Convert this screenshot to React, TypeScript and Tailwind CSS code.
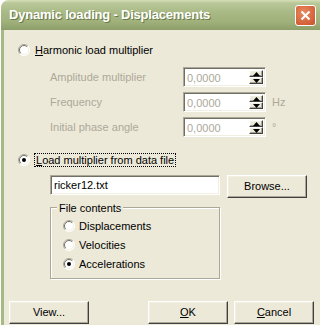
const sunken =
  "border border-t-[#ACA899] border-l-[#ACA899] border-b-white border-r-white shadow-[inset_1px_1px_0_#716F64,inset_-1px_-1px_0_#F1EFE2]";
const raised =
  "border border-t-white border-l-white border-b-[#404040] border-r-[#404040] shadow-[inset_-1px_-1px_0_#ACA899,inset_1px_1px_0_#F1EFE2] bg-[#ECE9D8]";

const Radio = ({ checked }: { checked?: boolean }) => (
  <svg width="12" height="12" viewBox="0 0 12 12" className="shrink-0">
    <circle cx="6" cy="6" r="5.5" fill="#fff" />
    <path d="M2.1 9.9 A5.5 5.5 0 0 1 9.9 2.1" fill="none" stroke="#ACA899" />
    <path d="M9.9 2.1 A5.5 5.5 0 0 1 2.1 9.9" fill="none" stroke="#fff" />
    <path d="M2.8 9.2 A4.5 4.5 0 0 1 9.2 2.8" fill="none" stroke="#716F64" />
    <path d="M9.2 2.8 A4.5 4.5 0 0 1 2.8 9.2" fill="none" stroke="#F1EFE2" />
    {checked && <circle cx="6" cy="6" r="2" fill="#000" />}
  </svg>
);

const SpinBox = () => (
  <div className={`w-[83px] h-[20px] bg-white flex items-stretch p-[2px] ${sunken}`}>
    <span className="flex-1 pl-[1px] leading-[16px] text-[#ACA899]">0,0000</span>
    <div className="w-[14px] flex flex-col">
      <div className={`flex-1 flex items-center justify-center ${raised}`}>
        <svg width="7" height="4" viewBox="0 0 7 4">
          <path d="M0 4 L3.5 0 L7 4 Z" fill="#000" />
        </svg>
      </div>
      <div className={`flex-1 flex items-center justify-center ${raised}`}>
        <svg width="7" height="4" viewBox="0 0 7 4">
          <path d="M0 0 L3.5 4 L7 0 Z" fill="#000" />
        </svg>
      </div>
    </div>
  </div>
);

const ParamRow = ({ label, unit }: { label: string; unit?: string }) => (
  <div className="flex items-center h-[20px]">
    <span className="w-[165px] pl-[32px] text-[#ACA899]">{label}</span>
    <SpinBox />
    <span className="ml-[6px] text-[#ACA899]">{unit}</span>
  </div>
);

const Button = ({ children, className = "" }: { children: React.ReactNode; className?: string }) => (
  <div className={`w-[80px] h-[23px] flex items-center justify-center text-black ${raised} ${className}`}>
    {children}
  </div>
);

export default function App() {
  return (
    <div className="w-[320px] h-[325px] overflow-hidden bg-white font-['Liberation_Sans',Arial,sans-serif] text-[11px] text-black">
      <div className="h-full ml-[1px] rounded-tl-[8px] overflow-hidden flex flex-col bg-[#ECE9D8]">
        <div className="h-[30px] shrink-0 flex items-center pl-[8px] pr-[4px] bg-[linear-gradient(#D6DFB8_0px,#BAC899_3px,#A9BA86_12px,#9FB07A_22px,#8D9F68_30px)]">
          <span className="flex-1 text-white font-bold text-[13px] tracking-[-0.2px] [text-shadow:1px_1px_0_#6B7A48]">
            Dynamic loading - Displacements
          </span>
          <div className="w-[21px] h-[21px] rounded-[3px] border border-white bg-[radial-gradient(circle_at_40%_35%,#E98A5E,#C9502C)] flex items-center justify-center">
            <svg width="11" height="11" viewBox="0 0 11 11">
              <path d="M1.5 1.5 L9.5 9.5 M9.5 1.5 L1.5 9.5" stroke="#fff" strokeWidth="2" />
            </svg>
          </div>
        </div>

        <div className="flex-1 flex flex-col border-l-[3px] border-[#A5B985] pl-[14px]">
          <div className="mt-[13px] h-[14px] flex items-center gap-[5px]">
            <Radio />
            <span>
              <u>H</u>armonic load multiplier
            </span>
          </div>

          <div className="mt-[10px] flex flex-col gap-[5px]">
            <ParamRow label="Amplitude multiplier" />
            <ParamRow label="Frequency" unit="Hz" />
            <ParamRow label="Initial phase angle" unit="°" />
          </div>

          <div className="mt-[16px] h-[14px] flex items-center gap-[4px]">
            <Radio checked />
            <span className="border border-dotted border-black px-[1px] leading-[12px]">
              <u>L</u>oad multiplier from data file
            </span>
          </div>

          <div className="mt-[8px] flex items-start pl-[32px] gap-[7px]">
            <div className={`w-[170px] h-[20px] bg-white pl-[3px] leading-[18px] ${sunken}`}>ricker12.txt</div>
            <Button>Browse...</Button>
          </div>

          <div className="ml-[32px] mt-[9px] w-[170px] relative border border-[#ACA899] shadow-[1px_1px_0_#fff,inset_1px_1px_0_#fff] pl-[12px] pt-[11px] pb-[7px] flex flex-col gap-[5px]">
            <span className="absolute -top-[8px] left-[6px] px-[2px] bg-[#ECE9D8]">File contents</span>
            {["Displacements", "Velocities", "Accelerations"].map((s, i) => (
              <div key={s} className="h-[14px] flex items-center gap-[4px]">
                <Radio checked={i === 2} />
                <span>{s}</span>
              </div>
            ))}
          </div>

          <div className="mt-[22px] flex items-center -ml-[9px] pr-[6px]">
            <Button>View...</Button>
            <div className="flex-1" />
            <Button>
              <u>O</u>K
            </Button>
            <Button className="ml-[6px]">
              <u>C</u>ancel
            </Button>
          </div>
        </div>
      </div>
    </div>
  );
}
